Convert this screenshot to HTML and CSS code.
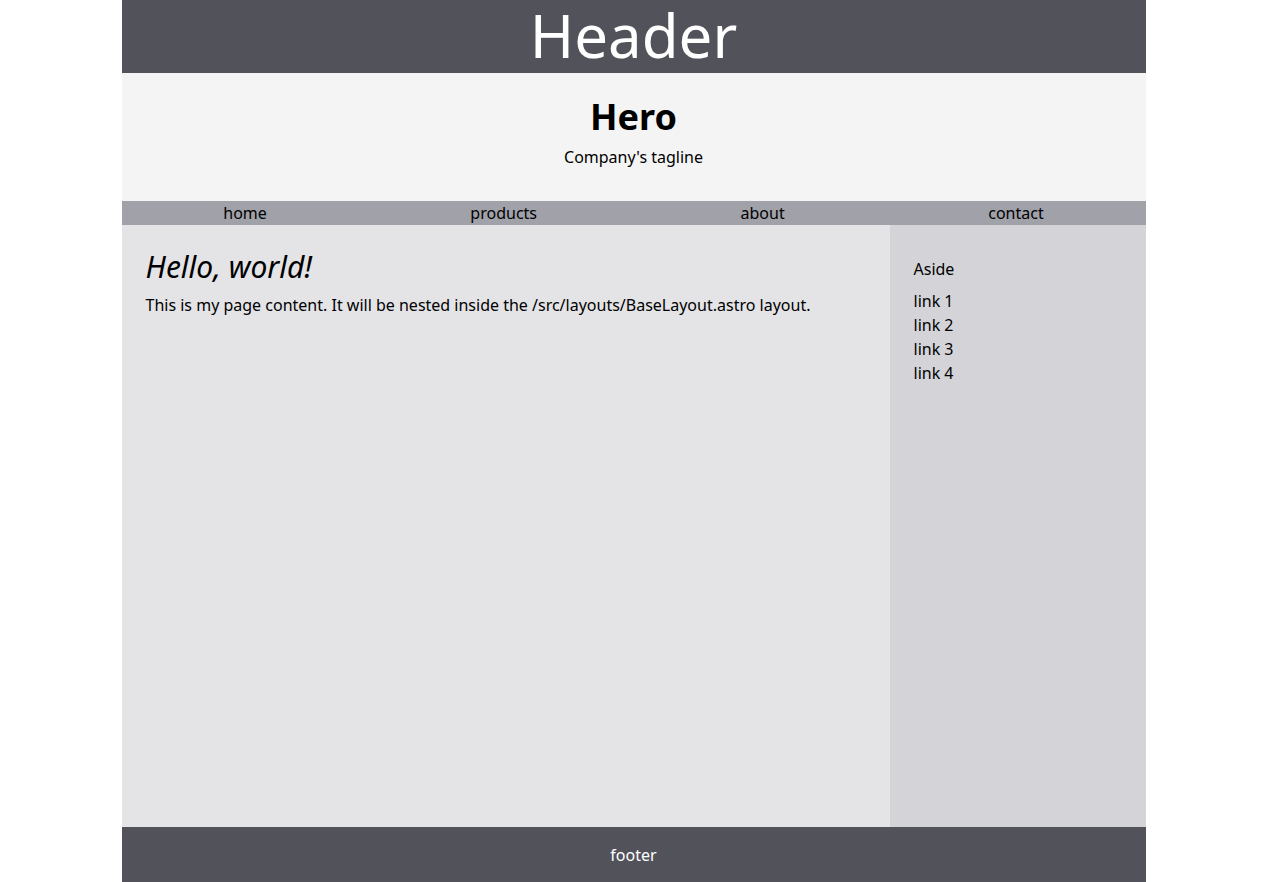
FILE: index.html
```html
<!DOCTYPE html>
<html lang="en">
<head>
<meta charset="utf-8">
<title>Astro</title>
<link rel="stylesheet" href="styles.css">
</head>
<body>
<div class="page">
  <header class="header"><h1 class="header-title">Header</h1></header>
  <section class="hero">
    <h2 class="hero-title">Hero</h2>
    <p class="hero-tagline">Company's tagline</p>
  </section>
  <nav class="nav">
    <a class="nav-link" href="#">home</a>
    <a class="nav-link" href="#">products</a>
    <a class="nav-link" href="#">about</a>
    <a class="nav-link" href="#">contact</a>
  </nav>
  <div class="body">
    <main class="content">
      <h1 class="content-title">Hello, world!</h1>
      <p class="content-text">This is my page content. It will be nested inside the /src/layouts/BaseLayout.astro layout.</p>
    </main>
    <aside class="aside">
      <h3 class="aside-title">Aside</h3>
      <ul class="aside-list">
        <li><a href="#">link 1</a></li>
        <li><a href="#">link 2</a></li>
        <li><a href="#">link 3</a></li>
        <li><a href="#">link 4</a></li>
      </ul>
    </aside>
  </div>
  <footer class="footer">footer</footer>
</div>
</body>
</html>
```
FILE: styles.css
```css
* { box-sizing: border-box; }
html { margin: 0; padding: 0; }
body {
  margin: 0;
  padding: 0 0 0 1px;
  background: #ffffff;
  font-family: "Noto Sans", "Open Sans", sans-serif;
  font-size: 16px;
  line-height: 24px;
  color: #000;
}
a { color: inherit; text-decoration: none; }
.page {
  width: 1024px;
  margin: 0 auto;
  display: flex;
  flex-direction: column;
}
.header {
  background: #52525b;
  color: #fff;
  text-align: center;
  height: 73px;
}
.header-title {
  margin: 0;
  font-size: 60px;
  line-height: 60px;
  font-weight: 400;
  padding-top: 5px;
}
.hero {
  background: #f4f4f5;
  text-align: center;
  padding: 24px 0 32px;
}
.hero-title {
  margin: 0;
  font-size: 36px;
  line-height: 40px;
  font-weight: 700;
}
.hero-tagline {
  margin: 8px 0 0;
}
.nav {
  background: #a1a1aa;
  display: flex;
  justify-content: space-around;
  height: 24px;
}
.body {
  display: grid;
  grid-template-columns: 3fr 1fr;
  min-height: 602px;
}
.content {
  background: #e4e4e7;
  padding: 24px;
}
.content-title {
  margin: 0;
  font-size: 30px;
  line-height: 36px;
  font-style: italic;
  font-weight: 400;
}
.content-text {
  margin: 8px 0 0;
}
.aside {
  background: #d4d4d8;
  padding: 32px 24px;
}
.aside-title {
  margin: 0;
  font-size: 16px;
  line-height: 24px;
  font-weight: 400;
}
.aside-list {
  list-style: none;
  margin: 8px 0 0;
  padding: 0;
}
.footer {
  background: #52525b;
  color: #fff;
  text-align: center;
  padding: 16px 0;
}
```
